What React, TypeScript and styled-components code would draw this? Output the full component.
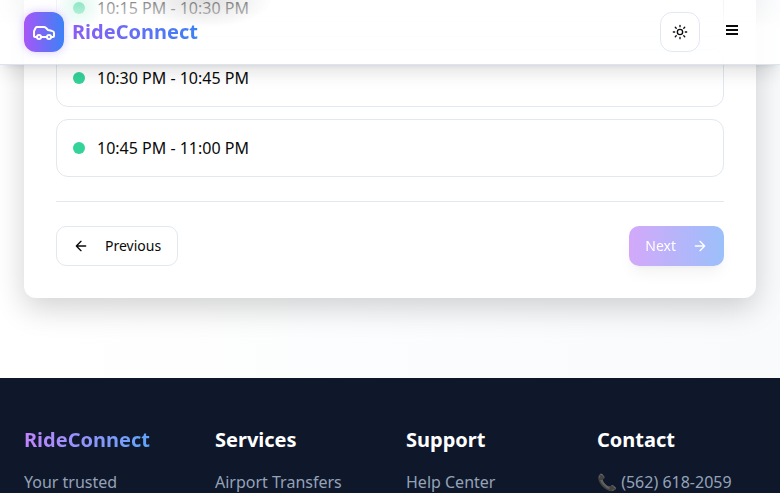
import React from "react";
import styled, { createGlobalStyle, css } from "styled-components";

const Global = createGlobalStyle`
  *, *::before, *::after { box-sizing: border-box; }
  body {
    margin: 0;
    font-family: "Noto Sans", sans-serif;
    font-size: 16px;
    line-height: 24px;
    color: #0a0a0a;
    background: #ffffff;
    overflow: hidden;
  }
  button { font: inherit; color: inherit; }
`;

const Page = styled.div`
  height: 100vh;
  overflow: hidden;
`;

const Header = styled.header`
  position: fixed;
  inset: 0 0 auto;
  z-index: 10;
  display: flex;
  align-items: center;
  justify-content: space-between;
  padding: 12px 24px;
  border-bottom: 1px solid #dbe3ef;
  background:
    radial-gradient(ellipse 68px 28px at 204px 0, rgba(0, 0, 0, 0.12), rgba(0, 0, 0, 0)),
    radial-gradient(circle 24px at 79px 6px, rgba(52, 211, 153, 0.15), rgba(52, 211, 153, 0)),
    linear-gradient(180deg, rgba(255, 255, 255, 0.5), rgba(255, 255, 255, 0.75) 18px, rgba(255, 255, 255, 0.9) 28px);
  box-shadow: 0 10px 18px -3px rgba(0, 0, 0, 0.12), 0 4px 6px -4px rgba(0, 0, 0, 0.1);
`;

const Brand = styled.a`
  display: flex;
  align-items: center;
  gap: 8px;
  text-decoration: none;
`;

const Logo = styled.span`
  display: grid;
  place-items: center;
  width: 40px;
  height: 40px;
  border-radius: 12px;
  color: #ffffff;
  background: linear-gradient(90deg, #a855f7, #3b82f6);
  box-shadow: 0 0 10px rgba(139, 92, 246, 0.35);
`;

const gradientText = css`
  background-clip: text;
  -webkit-background-clip: text;
  color: transparent;
`;

const BrandName = styled.span`
  font-size: 20px;
  line-height: 28px;
  font-weight: 700;
  background-image: linear-gradient(90deg, #8b5cf6, #3b82f6);
  ${gradientText}
`;

const Actions = styled.div`
  display: flex;
  align-items: flex-start;
  gap: 8px;
`;

const IconButton = styled.button<{ $outlined?: boolean }>`
  display: grid;
  place-items: center;
  width: ${(p) => (p.$outlined ? "40px" : "48px")};
  height: ${(p) => (p.$outlined ? "40px" : "36px")};
  padding: 0;
  border: ${(p) => (p.$outlined ? "1px solid #e2e8f0" : "0")};
  border-radius: 12px;
  background: ${(p) => (p.$outlined ? "#ffffff" : "transparent")};
`;

const Main = styled.main`
  padding: 0 24px 80px;
  background: linear-gradient(90deg, #ffffff, #f8fafc);
`;

const Card = styled.section`
  padding: 0 32px 32px;
  border-radius: 12px;
  background: #ffffff;
  box-shadow: 0 10px 30px rgba(0, 0, 0, 0.18);
`;

const SlotList = styled.div`
  display: grid;
  gap: 12px;
  margin-top: -21px;
  padding-bottom: 24px;
  border-bottom: 1px solid #e2e8f0;
`;

const Slot = styled.button`
  display: flex;
  align-items: center;
  gap: 12px;
  height: 58px;
  padding: 0 16px;
  border: 1px solid #e2e8f0;
  border-radius: 12px;
  background: #ffffff;
`;

const Dot = styled.span`
  width: 12px;
  height: 12px;
  border-radius: 50%;
  background: #34d399;
`;

const Nav = styled.div`
  display: flex;
  justify-content: space-between;
  padding-top: 24px;
`;

const NavButton = styled.button<{ $primary?: boolean }>`
  display: flex;
  align-items: center;
  gap: 16px;
  height: 40px;
  padding: 0 16px;
  border: 1px solid #e2e8f0;
  border-radius: 10px;
  background: #ffffff;
  font-size: 14px;
  line-height: 20px;
  ${(p) =>
    p.$primary &&
    css`
      border: 0;
      color: #ffffff;
      background: linear-gradient(90deg, #a855f7, #3b82f6);
      box-shadow: 0 10px 15px -3px rgba(0, 0, 0, 0.1), 0 4px 6px -4px rgba(0, 0, 0, 0.1);
      opacity: 0.5;
    `}
`;

const Footer = styled.footer`
  display: grid;
  grid-template-columns: repeat(4, minmax(0, 1fr));
  gap: 32px;
  padding: 48px 24px;
  color: #94a3b8;
  background: #0f172a;
`;

const FooterTitle = styled.h3<{ $brand?: boolean }>`
  width: fit-content;
  margin: 0 0 16px;
  font-size: 20px;
  line-height: 28px;
  font-weight: 700;
  color: #ffffff;
  ${(p) =>
    p.$brand &&
    css`
      background-image: linear-gradient(90deg, #c084fc, #60a5fa);
      ${gradientText}
    `}
`;

const FooterText = styled.p`
  margin: 0;
  white-space: nowrap;
`;

const FooterLink = styled.a`
  color: inherit;
  text-decoration: none;
  white-space: nowrap;
`;

const Icon = ({ size = 16, children }: { size?: number; children: React.ReactNode }) => (
  <svg width={size} height={size} viewBox="0 0 24 24" fill="none" stroke="currentColor"
    strokeWidth="2" strokeLinecap="round" strokeLinejoin="round" aria-hidden="true">
    {children}
  </svg>
);

const slots = ["10:15 PM - 10:30 PM", "10:30 PM - 10:45 PM", "10:45 PM - 11:00 PM"];

export default function App() {
  return (
    <Page>
      <Global />
      <Header>
        <Brand href="#">
          <Logo>
            <Icon size={24}>
              <path d="M19 17h2c.6 0 1-.4 1-1v-3c0-.9-.7-1.7-1.5-1.9C18.7 10.6 16 10 16 10s-1.3-1.4-2.2-2.3c-.5-.4-1.1-.7-1.8-.7H5c-.6 0-1.1.4-1.4.9l-1.4 2.9A3.7 3.7 0 0 0 2 12v4c0 .6.4 1 1 1h2" />
              <circle cx="7" cy="17" r="2" />
              <path d="M9 17h6" />
              <circle cx="17" cy="17" r="2" />
            </Icon>
          </Logo>
          <BrandName>RideConnect</BrandName>
        </Brand>
        <Actions>
          <IconButton $outlined aria-label="Toggle theme">
            <Icon>
              <circle cx="12" cy="12" r="4" />
              <path d="M12 2v2M12 20v2M4.93 4.93l1.41 1.41M17.66 17.66l1.41 1.41M2 12h2M20 12h2M6.34 17.66l-1.41 1.41M19.07 4.93l-1.41 1.41" />
            </Icon>
          </IconButton>
          <IconButton aria-label="Open menu">
            <Icon><path d="M3 6h18M3 12h18M3 18h18" strokeWidth="3" strokeLinecap="butt" /></Icon>
          </IconButton>
        </Actions>
      </Header>
      <Main>
        <Card>
          <SlotList>
            {slots.map((s) => (
              <Slot key={s}><Dot />{s}</Slot>
            ))}
          </SlotList>
          <Nav>
            <NavButton>
              <Icon><path d="m12 19-7-7 7-7M19 12H5" /></Icon>
              Previous
            </NavButton>
            <NavButton $primary disabled>
              Next
              <Icon><path d="M5 12h14M12 5l7 7-7 7" /></Icon>
            </NavButton>
          </Nav>
        </Card>
      </Main>
      <Footer>
        <div>
          <FooterTitle $brand>RideConnect</FooterTitle>
          <FooterText>Your trusted</FooterText>
        </div>
        <div>
          <FooterTitle>Services</FooterTitle>
          <FooterLink href="#">Airport Transfers</FooterLink>
        </div>
        <div>
          <FooterTitle>Support</FooterTitle>
          <FooterLink href="#">Help Center</FooterLink>
        </div>
        <div>
          <FooterTitle>Contact</FooterTitle>
          <FooterText>📞 (562) 618-2059</FooterText>
        </div>
      </Footer>
    </Page>
  );
}
